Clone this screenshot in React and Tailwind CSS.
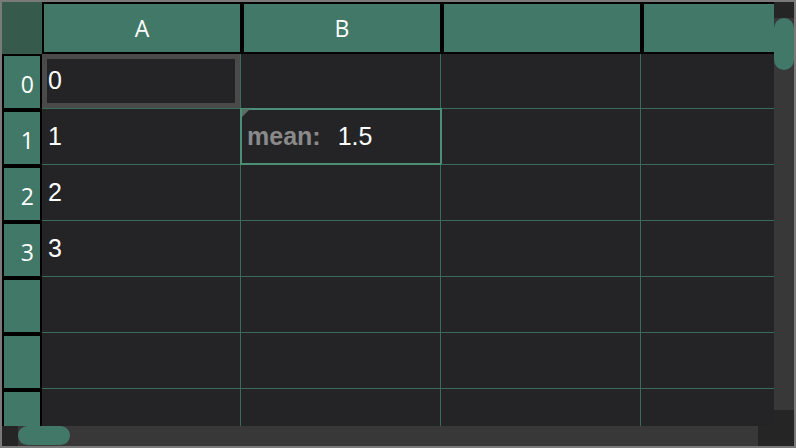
import React from "react";

const cols = ["A", "B", "", ""];
const rowLabels = ["0", "1", "2", "3", "", "", ""];

export default function App() {
  const cellData = [
    ["0", "", "", ""],
    ["1", "mean", "", ""],
    ["2", "", "", ""],
    ["3", "", "", ""],
    ["", "", "", ""],
    ["", "", "", ""],
    ["", "", "", ""],
  ];
  const colWidths = ["w-[199px]", "w-[200px]", "w-[200px]", "w-[200px]"];
  const rowHeights = ["h-[55px]", "h-[56px]", "h-[56px]", "h-[56px]", "h-[56px]", "h-[56px]", "h-[56px]"];

  return (
    <div className="w-[796px] h-[448px] bg-[#7a7a7a] p-[2px] overflow-hidden">
      <div className="w-[792px] h-[444px] flex flex-col">
        <div className="flex h-[424px]">
          {/* main grid */}
          <div className="w-[772px] h-[424px] overflow-hidden flex flex-col bg-[#242427]">
            {/* header row */}
            <div className="flex h-[52px] shrink-0">
              <div className="w-[40px] h-[52px] shrink-0 bg-[#365a4c]" />
              {cols.map((c, i) => (
                <div
                  key={i}
                  className="w-[200px] h-[52px] shrink-0 border-2 border-black bg-[#427868] flex items-center justify-center text-white text-[23px] font-['Open_Sans',sans-serif] pt-[1px]"
                >
                  {c}
                </div>
              ))}
            </div>
            {/* body */}
            <div className="flex flex-1 min-h-0">
              <div className="w-[40px] shrink-0 flex flex-col">
                {rowLabels.map((r, i) => (
                  <div
                    key={i}
                    className="w-[40px] h-[56px] shrink-0 border-2 border-black bg-[#427868] flex items-center justify-end pr-[6px] pt-[5px] text-white text-[23px] font-['Open_Sans',sans-serif]"
                  >
                    {r}
                  </div>
                ))}
              </div>
              <div className="flex flex-col">
                {cellData.map((row, ri) => (
                  <div key={ri} className={`flex shrink-0 ${rowHeights[ri]}`}>
                    {row.map((v, ci) => (
                      <div
                        key={ci}
                        className={`${colWidths[ci]} h-full shrink-0 relative border-r border-b border-[#3a6a58] flex items-center pl-[6px] text-white text-[25px] font-['Liberation_Sans',Arial,sans-serif]`}
                      >
                        {ri === 0 && ci === 0 && (
                          <div className="absolute left-0 top-0 w-[198px] h-[54px] border-[5px] border-[#4a4a4a]" />
                        )}
                        {ri === 1 && ci === 1 ? (
                          <>
                            <div className="absolute left-[-1px] top-[-1px] w-[202px] h-[57px] border-2 border-[#4a8f76]" />
                            <div className="absolute left-[1px] top-0 w-0 h-0 border-t-[8px] border-t-[#5a6d66] border-r-[8px] border-r-transparent" />
                            <span className="relative font-bold text-[#8a8a8a]">mean:</span>
                            <span className="relative ml-[17px]">1.5</span>
                          </>
                        ) : (
                          <span className="relative">{v}</span>
                        )}
                      </div>
                    ))}
                  </div>
                ))}
              </div>
            </div>
          </div>
          {/* vertical scrollbar */}
          <div className="w-[20px] h-[424px] flex flex-col bg-[#383838]">
            <div className="h-[16px] shrink-0 bg-[#252525]" />
            <div className="h-[52px] w-[20px] shrink-0 rounded-full bg-[#427868]" />
            <div className="flex-1" />
            <div className="h-[16px] shrink-0 bg-[#252525]" />
          </div>
        </div>
        {/* horizontal scrollbar */}
        <div className="flex h-[20px]">
          <div className="w-[772px] h-[20px] flex bg-[#383838]">
            <div className="w-[16px] shrink-0 bg-[#252525]" />
            <div className="w-[52px] h-[19px] shrink-0 rounded-full bg-[#427868]" />
            <div className="flex-1" />
            <div className="w-[16px] shrink-0 bg-[#252525]" />
          </div>
          <div className="w-[20px] h-[20px] bg-[#252525]" />
        </div>
      </div>
    </div>
  );
}
